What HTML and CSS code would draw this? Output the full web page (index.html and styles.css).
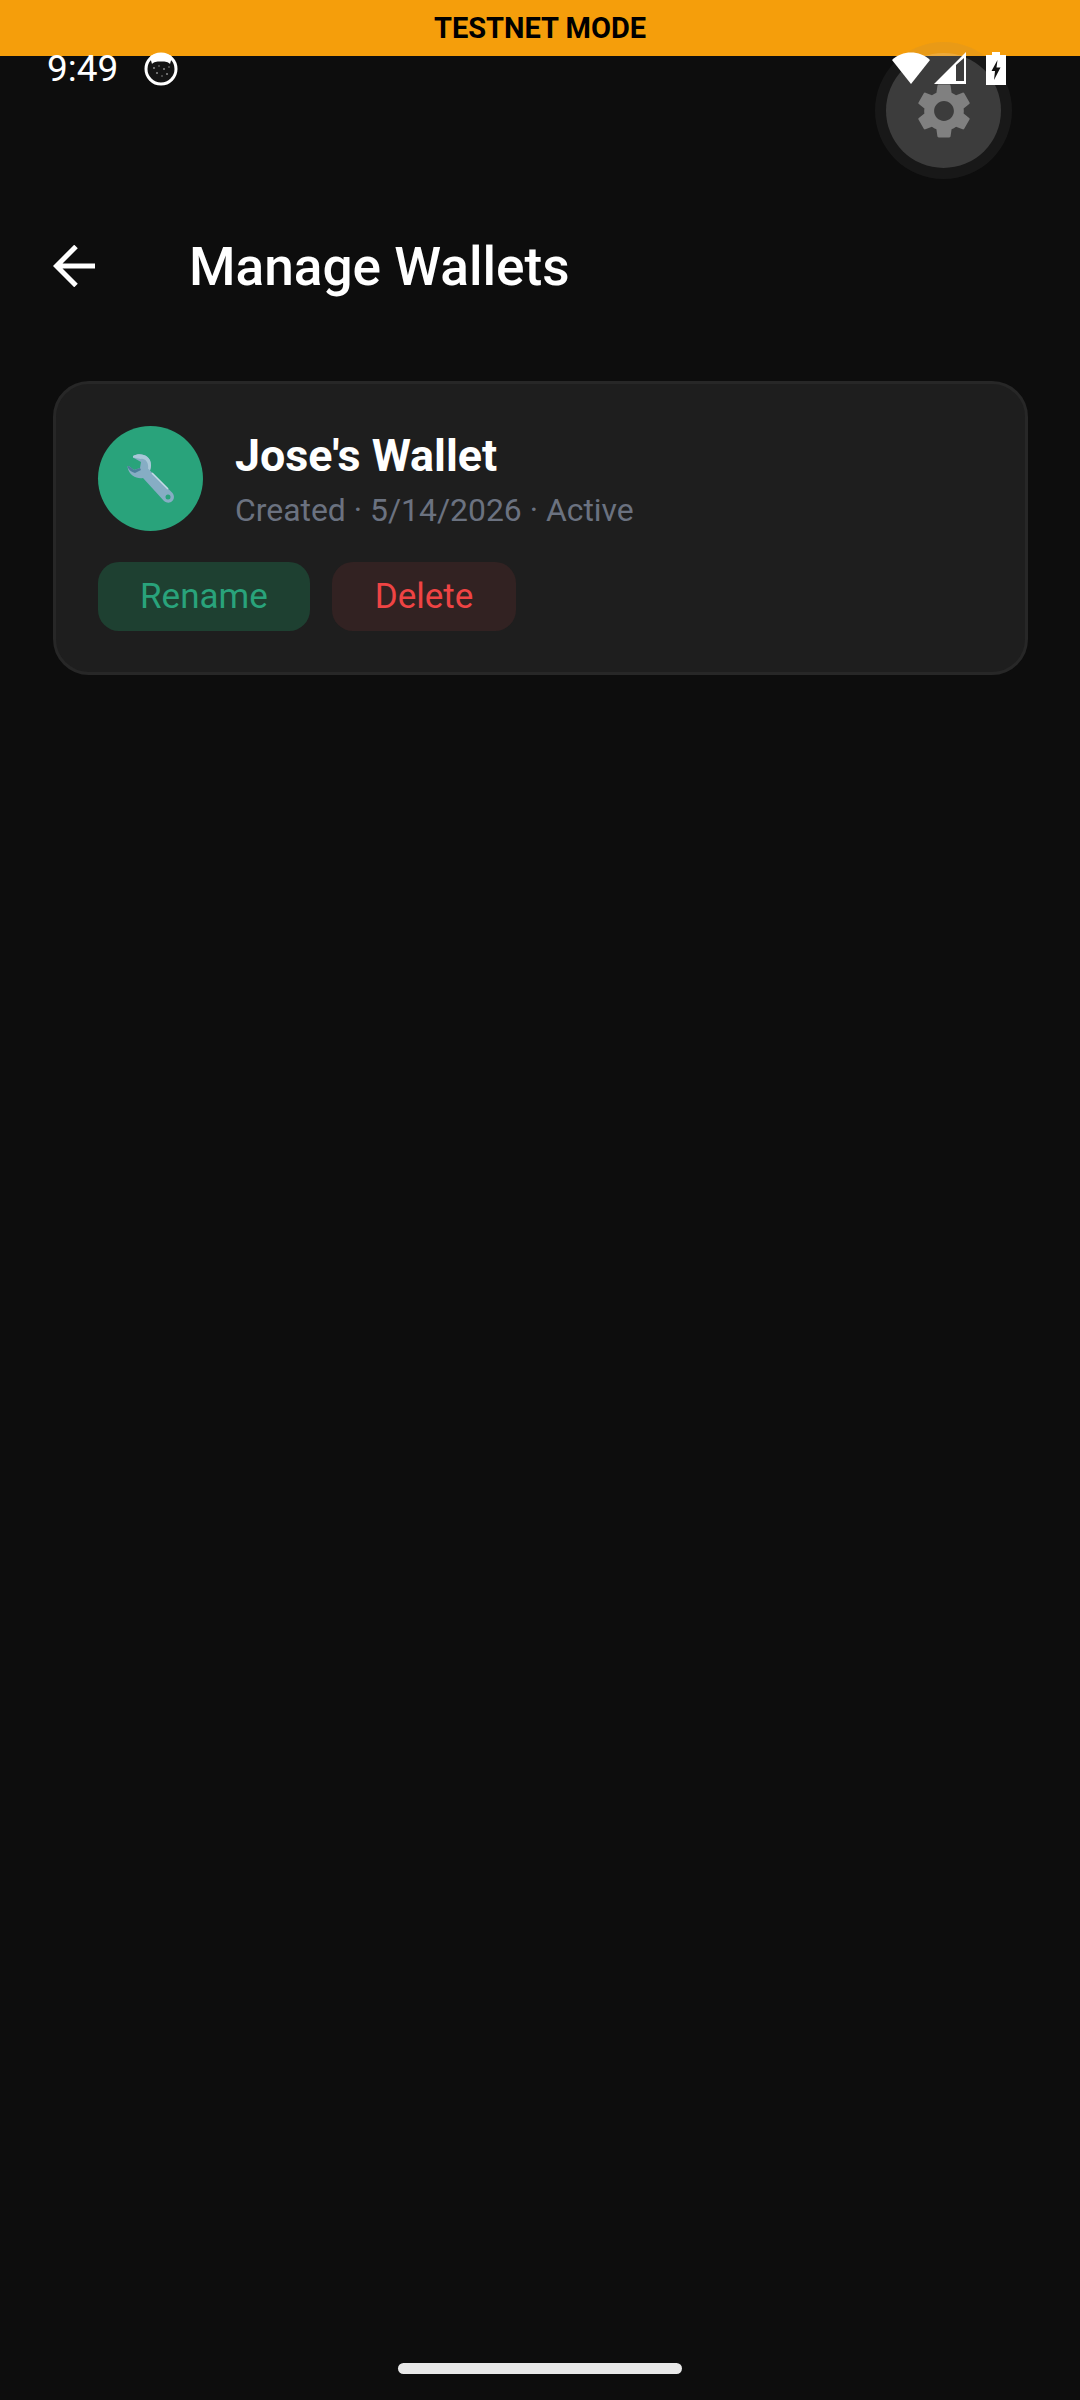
FILE: index.html
```html
<!DOCTYPE html>
<html lang="en">
<head>
<meta charset="utf-8">
<title>Manage Wallets</title>
<link rel="stylesheet" href="styles.css">
</head>
<body>
<div class="banner">TESTNET MODE</div>

<div class="fab">
  <div class="fab-inner">
    <svg class="gear" viewBox="0 0 24 24"><path d="M19.14 12.94c.04-.3.06-.61.06-.94 0-.32-.02-.64-.07-.94l2.03-1.58c.18-.14.23-.41.12-.61l-1.92-3.32c-.12-.22-.37-.29-.59-.22l-2.39.96c-.5-.38-1.03-.7-1.62-.94l-.36-2.54c-.04-.24-.24-.41-.48-.41h-3.84c-.24 0-.43.17-.47.41l-.36 2.54c-.59.24-1.13.57-1.62.94l-2.39-.96c-.22-.08-.47 0-.59.22L2.74 8.87c-.12.21-.08.47.12.61l2.03 1.58c-.05.3-.09.63-.09.94s.02.64.07.94l-2.03 1.58c-.18.14-.23.41-.12.61l1.92 3.32c.12.22.37.29.59.22l2.39-.96c.5.38 1.03.7 1.62.94l.36 2.54c.05.24.24.41.48.41h3.84c.24 0 .44-.17.47-.41l.36-2.54c.59-.24 1.13-.56 1.62-.94l2.39.96c.22.08.47 0 .59-.22l1.92-3.32c.12-.22.07-.47-.12-.61l-2.01-1.58zM12 15.6c-1.98 0-3.6-1.62-3.6-3.6s1.62-3.6 3.6-3.6 3.6 1.62 3.6 3.6-1.62 3.6-3.6 3.6z"/></svg>
  </div>
</div>

<div class="status">
  <span class="time">9:49</span>
  <svg class="notif" viewBox="0 0 34 34">
    <circle cx="17" cy="17" r="15" fill="#141414" stroke="#fff" stroke-width="3"/>
    <path d="M6 5 C10 0 24 0 28 5 L26 12 C24 10 22 9.5 17 9.5 C12 9.5 10 10 8 12 Z" fill="#fff"/>
    <g fill="#8a8a8a"><circle cx="10" cy="16" r="1"/><circle cx="15" cy="14" r=".8"/><circle cx="20" cy="17" r="1"/><circle cx="25" cy="15" r=".8"/><circle cx="13" cy="21" r="1"/><circle cx="18" cy="24" r=".8"/><circle cx="23" cy="22" r="1"/></g>
  </svg>
  <span class="status-spacer"></span>
  <svg class="wifi" viewBox="0 0 40 34"><path d="M20 33 L1 9 C11 -1 29 -1 39 9 Z" fill="#fff"/></svg>
  <svg class="signal" viewBox="0 0 33 33"><path fill-rule="evenodd" d="M0 32 L32 0 V32 Z M22 13 V29 H30 V6 Z" fill="#fff"/></svg>
  <svg class="battery" viewBox="0 0 20 33"><path d="M6 0 H14 V3 H20 V33 H0 V3 H6 Z" fill="#fff"/><path d="M11.5 8 L5.5 19 H9 L8 28 L14.5 15.5 H10.5 Z" fill="#111"/></svg>
</div>

<header class="topbar">
  <svg class="back" viewBox="0 0 42 42"><path d="M42 21 H4 M23 1.5 L3.5 21 L23 40.5" fill="none" stroke="#fff" stroke-width="5"/></svg>
  <h1 class="title">Manage Wallets</h1>
</header>

<main class="content">
  <section class="card">
    <div class="card-head">
      <div class="avatar">
        <svg class="wrench" viewBox="0 0 48 50">
          <path d="M6 2 C13 -2 24 1 24 11 C24 13 23.5 15 23 16.5 L45.5 39 C50 45 43 52 37 47 L16 24 C10 25 2 22 0.5 13 C0.5 12 1.5 11.5 2.5 12.5 L7 16 L13 14 L14 8 L6 3.5 Z" fill="#86adc4"/>
          <path d="M6 2 C13 -2 24 1 24 11 C24 13 23.5 15 23 16.5 L21 14.5 C22 9 18 4 14 5 L6 3.5 Z" fill="#a9c8d8"/>
          <path d="M0.5 13 C0.5 12 1.5 11.5 2.5 12.5 L7 16 L13 14 L14 16 L8 19 C4 18 2 16 0.5 13 Z" fill="#4d7f9c"/>
          <path d="M25 19 L41 35" stroke="#c5dbe6" stroke-width="1.6" fill="none"/>
          <circle cx="41" cy="43" r="2.5" fill="#29a37b"/>
        </svg>
      </div>
      <div class="info">
        <div class="name">Jose's Wallet</div>
        <div class="meta">Created · 5/14/2026 · Active</div>
      </div>
    </div>
    <div class="actions">
      <button class="btn btn-rename">Rename</button>
      <button class="btn btn-delete">Delete</button>
    </div>
  </section>
</main>

<div class="home-bar"></div>
</body>
</html>
```

FILE: styles.css
```css
* { box-sizing: border-box; }
html, body { margin: 0; padding: 0; }
body {
  width: 1080px;
  height: 2400px;
  background: #0d0d0d;
  color: #fff;
  font-family: Roboto, "Liberation Sans", sans-serif;
  display: flex;
  flex-direction: column;
  overflow: hidden;
  position: relative;
}
.banner {
  height: 56px;
  background: #f59e0b;
  color: #000;
  font-size: 29px;
  font-weight: 700;
  display: flex;
  align-items: center;
  justify-content: center;
}
.fab {
  position: absolute;
  left: 875px;
  top: 42px;
  width: 137px;
  height: 137px;
  border-radius: 50%;
  background: rgba(128, 128, 128, 0.1);
  display: flex;
  align-items: center;
  justify-content: center;
}
.fab-inner {
  width: 115px;
  height: 115px;
  border-radius: 50%;
  background: rgba(255, 255, 255, 0.155);
  display: flex;
  align-items: center;
  justify-content: center;
}
.gear { width: 66px; height: 66px; fill: #808080; }
.status {
  position: absolute;
  left: 0;
  top: 50px;
  width: 100%;
  height: 36px;
  padding: 0 74px 0 47px;
  display: flex;
  align-items: center;
}
.time { font-size: 37px; line-height: 36px; font-weight: 400; margin-top: 2px; }
.notif { width: 34px; height: 34px; margin-left: 26px; margin-top: 2px; }
.status-spacer { flex: 1; }
.wifi { width: 40px; height: 34px; }
.signal { width: 33px; height: 33px; margin-left: 3px; }
.battery { width: 20px; height: 33px; margin-left: 19px; }
.topbar {
  display: flex;
  align-items: center;
  padding: 0 0 0 53px;
  margin-top: 180px;
  height: 60px;
}
.back { width: 42px; height: 42px; flex: none; }
.title {
  margin: 2px 0 0 94px;
  font-size: 53.2px;
  font-weight: 500;
  line-height: 60px;
}
.content { padding: 85px 52px 0 53px; }
.card {
  background: #1e1e1e;
  border: 3px solid #272727;
  border-radius: 36px;
  height: 294px;
  padding: 42px 42px 0;
}
.card-head { display: flex; align-items: center; gap: 32px; }
.avatar {
  width: 105px;
  height: 105px;
  border-radius: 50%;
  background: #29a37b;
  display: flex;
  align-items: center;
  justify-content: center;
  flex: none;
}
.wrench { width: 48px; height: 50px; }
.info { display: flex; flex-direction: column; gap: 9px; padding-top: 1px; }
.name { font-size: 44.8px; font-weight: 700; line-height: 52px; }
.meta { font-size: 31.9px; line-height: 38px; color: #6b7280; }
.actions { display: flex; gap: 21px; margin-top: 31px; }
.btn {
  height: 69px;
  border: 0;
  border-radius: 21px;
  font-family: inherit;
  font-size: 35px;
  padding: 0 42px;
}
.btn-rename { background: #1e4031; color: #29a37b; }
.btn-delete { background: #322222; color: #ef4444; padding: 0 43px; margin-left: 1px; }
.home-bar {
  width: 284px;
  height: 11px;
  border-radius: 6px;
  background: #e8e8e8;
  margin: auto auto 26px;
}
```
